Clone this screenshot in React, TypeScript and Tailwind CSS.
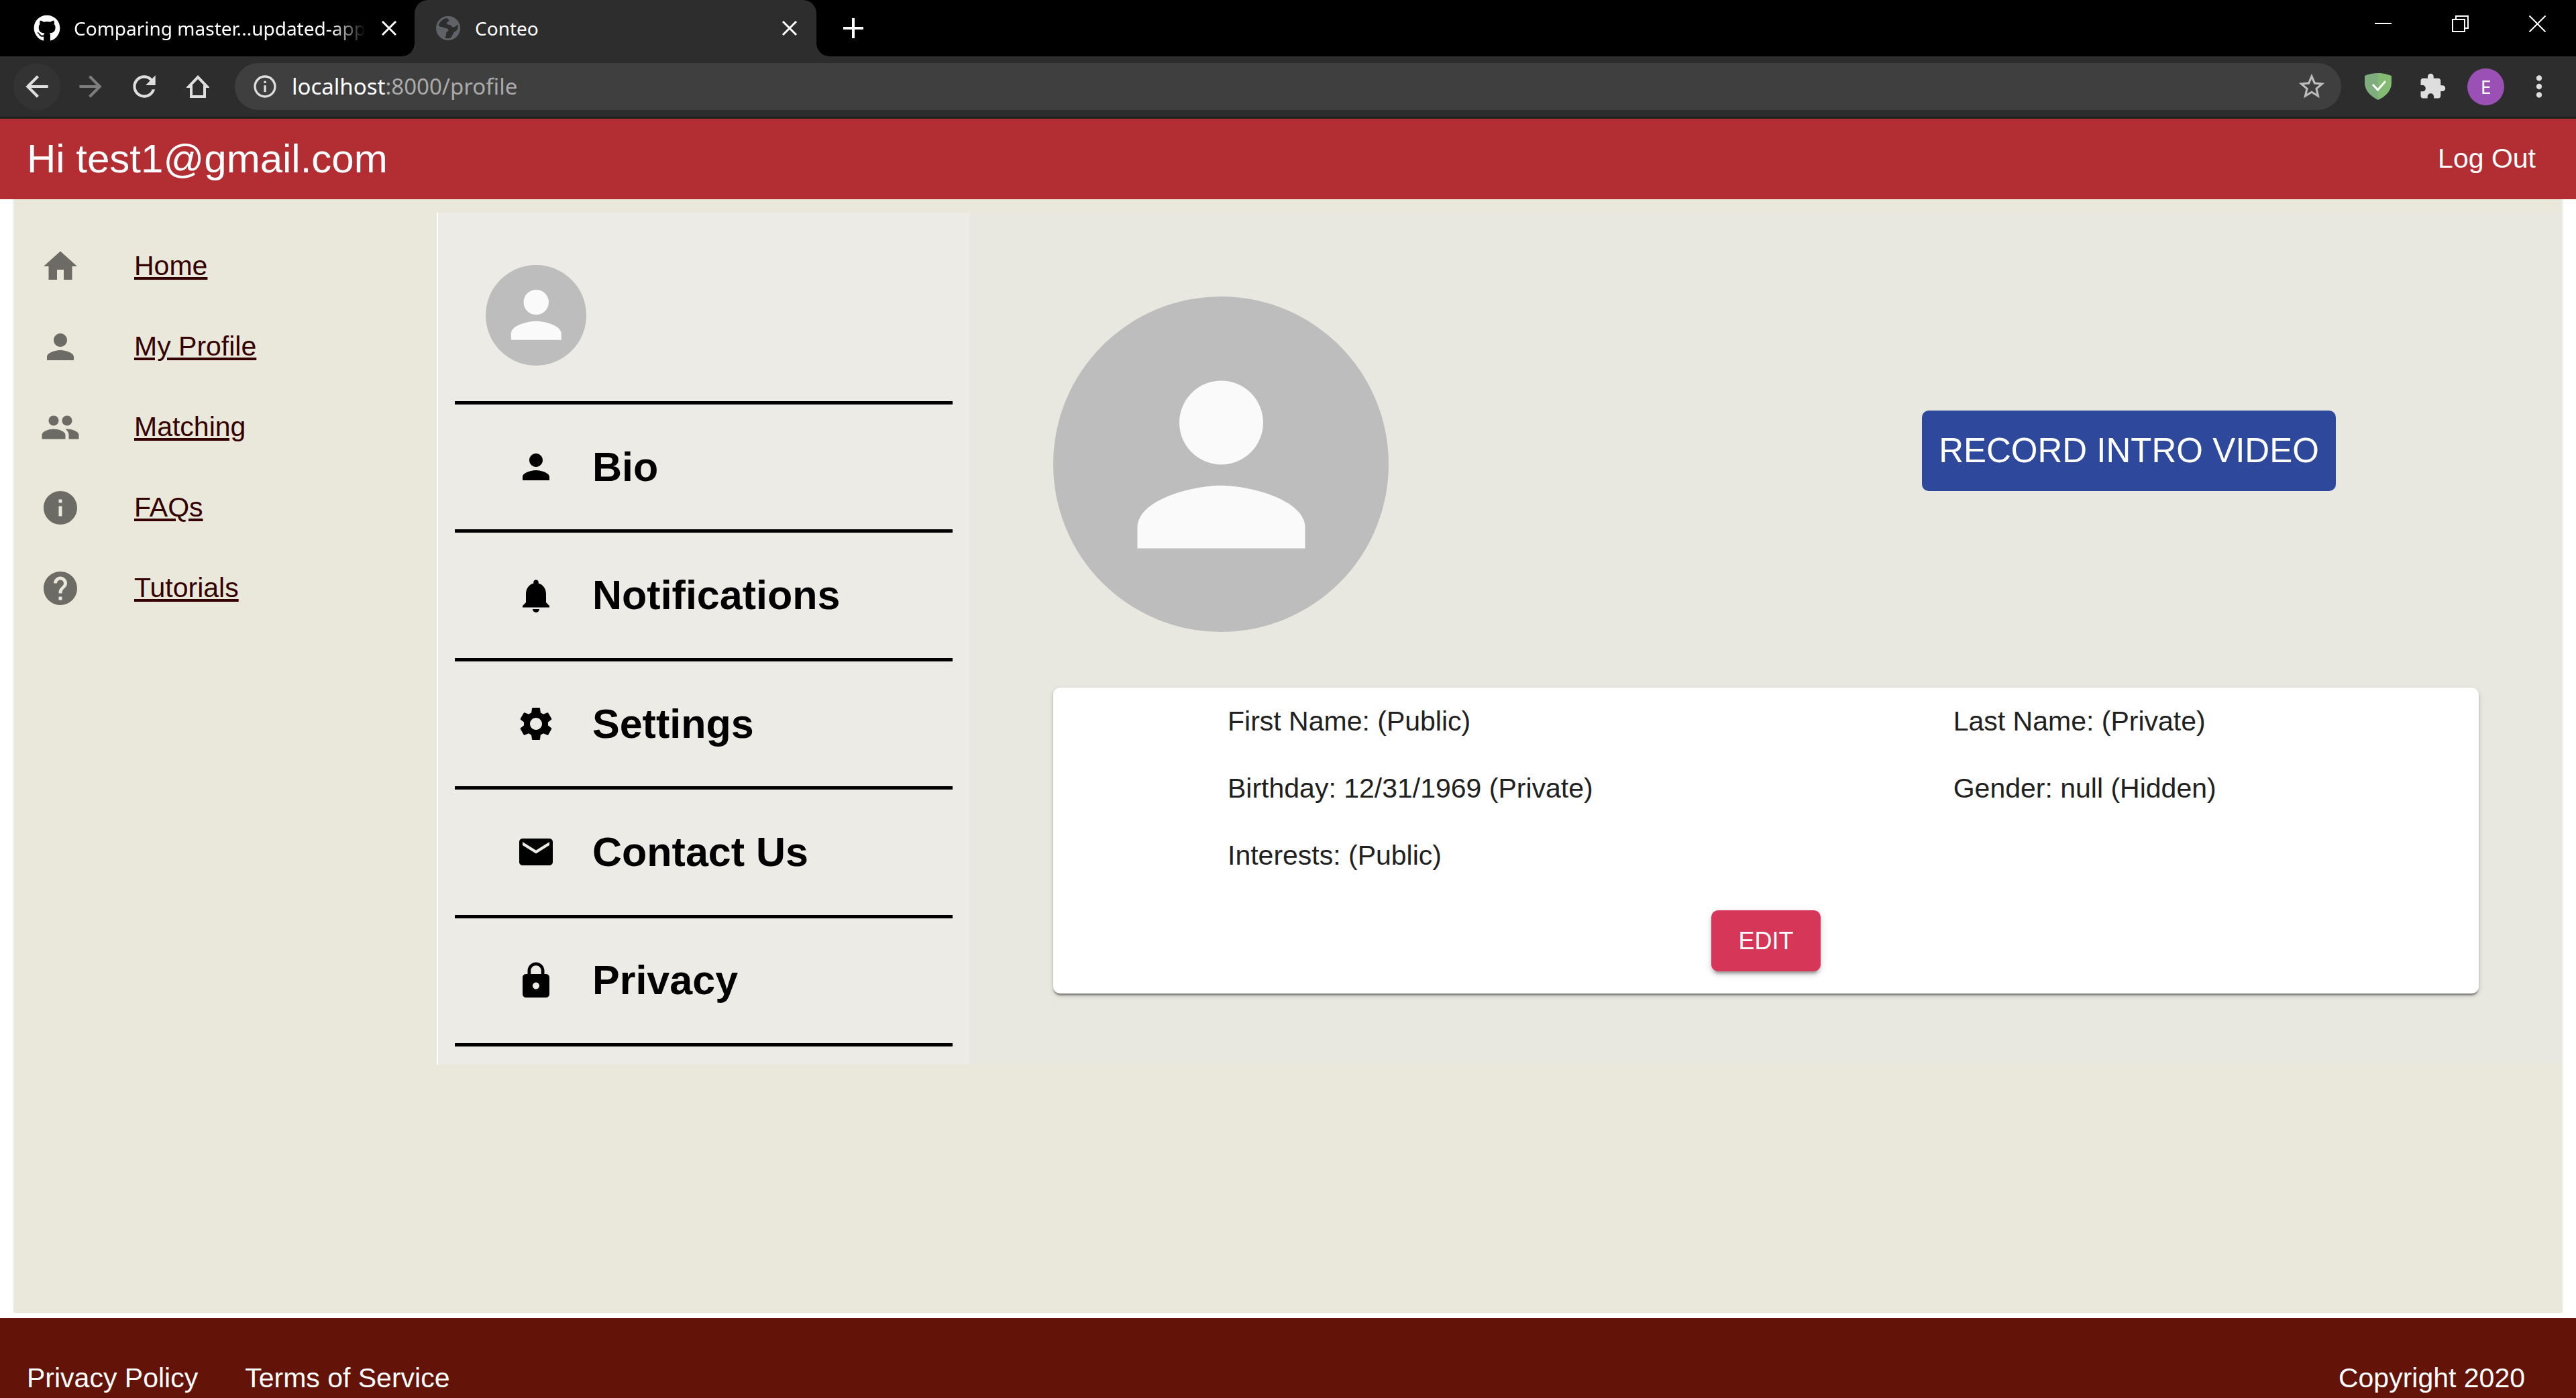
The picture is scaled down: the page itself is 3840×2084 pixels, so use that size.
import type { ComponentType } from "react";
import {
  MdArrowBack,
  MdArrowForward,
  MdEmail,
  MdExtension,
  MdGroup,
  MdHelp,
  MdHome,
  MdInfo,
  MdInfoOutline,
  MdLock,
  MdMoreVert,
  MdNotifications,
  MdPerson,
  MdRefresh,
  MdSettings,
  MdStarBorder,
} from "react-icons/md";
import { FaGithub } from "react-icons/fa";

type Icon = ComponentType<{ className?: string }>;

const navLinks: { label: string; Icon: Icon }[] = [
  { label: "Home", Icon: MdHome },
  { label: "My Profile", Icon: MdPerson },
  { label: "Matching", Icon: MdGroup },
  { label: "FAQs", Icon: MdInfo },
  { label: "Tutorials", Icon: MdHelp },
];

const sections: { label: string; Icon: Icon }[] = [
  { label: "Bio", Icon: MdPerson },
  { label: "Notifications", Icon: MdNotifications },
  { label: "Settings", Icon: MdSettings },
  { label: "Contact Us", Icon: MdEmail },
  { label: "Privacy", Icon: MdLock },
];

const fields = [
  "First Name: (Public)",
  "Last Name: (Private)",
  "Birthday: 12/31/1969 (Private)",
  "Gender: null (Hidden)",
  "Interests: (Public)",
];

function Cross({ className }: { className: string }) {
  return (
    <svg viewBox="0 0 24 24" className={className} fill="none" stroke="currentColor" strokeWidth="3">
      <path d="M2 2L22 22M22 2L2 22" />
    </svg>
  );
}

function Globe() {
  return (
    <svg viewBox="0 0 24 24" className="size-9 shrink-0">
      <circle cx="12" cy="12" r="12" fill="#5f6368" />
      <path
        fill="#2d2d2d"
        d="M10 2.200c-3.600.8-6.500 3.600-7.600 7.100 1.500 1.600 3.800 1.200 5.400 2.200 1.400.8 3.200.3 4.200 1.500.9 1.200-.3 2.300-1.400 3-1.200.8-.2 2.300-.8 3.500-.3 1-1 1.700-.8 2.400 2.200.6 4.300.2 6-.8 1.200-1.400 1.400-3.200 2.600-4.600 1-1.300 2.700-1.700 3.600-3 .8-1.900.7-3.600.2-5.200-1.300 1.100-2.400 2.700-4.200 2.600-1.800 0-2.200-2-3.900-2.200-1.300-.2-2.700-.4-2.700-1.700.1-1.300 1.800-1.100 2.200-2.300.3-1.200-1.200-2.500-2.800-2.500z"
      />
    </svg>
  );
}

function Shield() {
  return (
    <svg viewBox="0 0 40 40" className="size-10">
      <path fill="#80ad80" d="M20 0C13 0 6 1.500 0 4v10c0 12 8 20 20 26z" />
      <path fill="#83bb72" d="M20 0c7 0 14 1.500 20 4v10c0 12-8 20-20 26z" />
      <path d="M12 17L19.500 25L31 12" fill="none" stroke="#fff" strokeWidth="3" />
    </svg>
  );
}

function TabStrip() {
  return (
    <div className="flex h-[84px] items-stretch bg-black text-[28px] text-white">
      <div className="flex w-[618px] items-center pr-[26px] pl-[50px]">
        <FaGithub className="size-10 shrink-0" />
        <span className="ml-5 whitespace-nowrap [mask-image:linear-gradient(to_right,black_88%,transparent)]">
          Comparing master...updated-app
        </span>
        <button aria-label="Close tab" className="ml-auto">
          <Cross className="size-6" />
        </button>
      </div>
      <div className="relative flex w-[599px] items-center rounded-t-[20px] bg-[#2d2d2d] pr-[28px] pl-8">
        <span className="absolute bottom-0 -left-5 size-5 bg-[radial-gradient(circle_at_top_left,black_20px,#2d2d2d_20px)]" />
        <span className="absolute -right-5 bottom-0 size-5 bg-[radial-gradient(circle_at_top_right,black_20px,#2d2d2d_20px)]" />
        <Globe />
        <span className="ml-[22px]">Conteo</span>
        <button aria-label="Close tab" className="ml-auto">
          <Cross className="size-6" />
        </button>
      </div>
      <button aria-label="New tab" className="ml-10 flex items-center">
        <svg viewBox="0 0 30 30" className="size-[30px]" stroke="currentColor" strokeWidth="4">
          <path d="M15 0V30M0 15H30" />
        </svg>
      </button>
      <div className="ml-auto flex items-start gap-[90px] pt-[23px] pr-[45px]">
        <button aria-label="Minimize">
          <svg viewBox="0 0 25 25" className="size-[25px]" fill="currentColor">
            <path d="M0 11h25v2H0z" />
          </svg>
        </button>
        <button aria-label="Restore">
          <svg viewBox="0 0 25 25" className="size-[25px]" fill="none" stroke="currentColor" strokeWidth="2">
            <path d="M1 6h18v18H1zM6 6V1h18v18h-5" />
          </svg>
        </button>
        <button aria-label="Close window">
          <svg viewBox="0 0 25 25" className="size-[25px]" fill="none" stroke="currentColor" strokeWidth="2">
            <path d="M0.500 0.500L24.500 24.500M24.500 0.500L0.500 24.500" />
          </svg>
        </button>
      </div>
    </div>
  );
}

function Toolbar() {
  return (
    <div className="flex h-[93px] items-center border-b-3 border-[#1f2020] bg-[#2d2d2d] pr-[30px] pl-5 text-[#dedede]">
      <div className="flex gap-[10px]">
        <button aria-label="Back" className="flex size-[70px] items-center justify-center rounded-full bg-[#333333]">
          <MdArrowBack className="size-[50px]" />
        </button>
        <button aria-label="Forward" className="flex size-[70px] items-center justify-center text-[#7d7d7d]">
          <MdArrowForward className="size-[50px]" />
        </button>
        <button aria-label="Reload" className="flex size-[70px] items-center justify-center">
          <MdRefresh className="size-[50px]" />
        </button>
        <button aria-label="Home" className="flex size-[70px] items-center justify-center">
          <svg viewBox="0 0 34 34" className="size-[34px]" fill="none" stroke="currentColor" strokeWidth="4">
            <path d="M17 3L3.500 17H7v15h20V17h3.500z" />
          </svg>
        </button>
      </div>
      <div className="ml-5 flex h-[70px] flex-1 items-center rounded-full bg-[#3f3f3f] pr-[21px] pl-[25px]">
        <MdInfoOutline className="size-10" />
        <span className="ml-5 flex-1 text-[33px] text-[#aaaaaa]">
          <span className="text-white">localhost</span>:8000/profile
        </span>
        <button aria-label="Bookmark this page" className="text-[#bdbdbd]">
          <MdStarBorder className="size-[46px]" />
        </button>
      </div>
      <div className="ml-[35px] flex items-center">
        <button aria-label="Ad blocker">
          <Shield />
        </button>
        <button aria-label="Extensions" className="ml-[40px]">
          <MdExtension className="size-[42px]" />
        </button>
        <button
          aria-label="Profile E"
          className="ml-[31px] flex size-[55px] items-center justify-center rounded-full bg-[#9a50b5] text-[28px] text-white"
        >
          E
        </button>
        <button aria-label="Menu" className="ml-[27px]">
          <MdMoreVert className="size-[50px]" />
        </button>
      </div>
    </div>
  );
}

function SideNav() {
  return (
    <nav className="w-[631px] shrink-0 pt-5">
      {navLinks.map(({ label, Icon }) => (
        <div key={label} className="flex h-[120px] items-center pl-10">
          <Icon className="size-[60px] text-[#6c6b65]" />
          <a href="#" className="ml-20 text-[41px] text-[#350000] underline">
            {label}
          </a>
        </div>
      ))}
    </nav>
  );
}

function ProfileMenu() {
  return (
    <section className="flex w-[794px] shrink-0 flex-col border-l-2 border-white bg-[#ecebe5] px-[25px] pb-[27px]">
      <div className="flex h-[286px] items-center border-b-5 border-black pt-6 pl-[46px]">
        <div className="flex size-[150px] items-center justify-center rounded-full bg-[#bdbdbd]">
          <MdPerson className="size-3/4 text-[#fafafa]" />
        </div>
      </div>
      <ul className="flex flex-1 flex-col">
        {sections.map(({ label, Icon }) => (
          <li key={label} className="flex flex-1 border-b-5 border-black">
            <button className="flex flex-1 items-center pl-[91px] text-[61px] leading-none font-bold">
              <Icon className="mr-[54px] size-[60px]" />
              {label}
            </button>
          </li>
        ))}
      </ul>
    </section>
  );
}

function ProfileDetails() {
  return (
    <section className="flex-1 bg-[#e8e8e0] px-[125px] pt-[125px] pb-[106px]">
      <div className="flex">
        <div className="flex size-[500px] items-center justify-center rounded-full bg-[#bdbdbd]">
          <MdPerson className="size-3/4 text-[#fafafa]" />
        </div>
        <div className="flex flex-1 justify-end pt-[170px] pr-[213px]">
          <button className="h-[120px] min-w-[617px] rounded-[10px] bg-[#2e489b] px-5 text-[51px] text-white">
            RECORD INTRO VIDEO
          </button>
        </div>
      </div>
      <div className="mt-[83px] rounded-[10px] bg-white pb-[33px] text-[#212121] shadow-[0_5px_3px_-3px_rgba(0,0,0,0.3),0_3px_3px_rgba(0,0,0,0.2),0_3px_8px_rgba(0,0,0,0.14)]">
        <div className="grid grid-cols-[58%_1fr] pl-[260px] text-[41px] leading-[100px]">
          {fields.map((field) => (
            <p key={field}>{field}</p>
          ))}
        </div>
        <div className="mt-[32px] flex justify-center">
          <button className="h-[91px] min-w-[163px] rounded-[10px] bg-[#d63658] text-[36px] text-white shadow-[0_8px_3px_-5px_rgba(0,0,0,0.2),0_5px_5px_rgba(0,0,0,0.14),0_3px_13px_rgba(0,0,0,0.12)]">
            EDIT
          </button>
        </div>
      </div>
    </section>
  );
}

export default function App() {
  return (
    <div className="flex min-h-screen flex-col bg-white font-['Liberation_Sans',Arial,sans-serif]">
      <div className="font-['Noto_Sans','Open_Sans',sans-serif]">
        <TabStrip />
        <Toolbar />
      </div>
      <header className="flex h-[120px] items-center justify-between bg-[#b22e33] pr-[60px] pl-10 text-white">
        <h1 className="text-[60px]">Hi test1@gmail.com</h1>
        <a href="#" className="text-[41px]">
          Log Out
        </a>
      </header>
      <main className="mx-5 mb-2 flex flex-1 items-start bg-[#eae8db] pt-5">
        <SideNav />
        <div className="flex min-w-0 flex-1">
          <ProfileMenu />
          <ProfileDetails />
        </div>
      </main>
      <footer className="flex h-[119px] items-end justify-between bg-[#641309] pr-[76px] pl-10 text-[41px] leading-[60px] text-white">
        <div className="flex gap-[70px]">
          <a href="#">Privacy Policy</a>
          <a href="#">Terms of Service</a>
        </div>
        <p>Copyright 2020</p>
      </footer>
    </div>
  );
}
